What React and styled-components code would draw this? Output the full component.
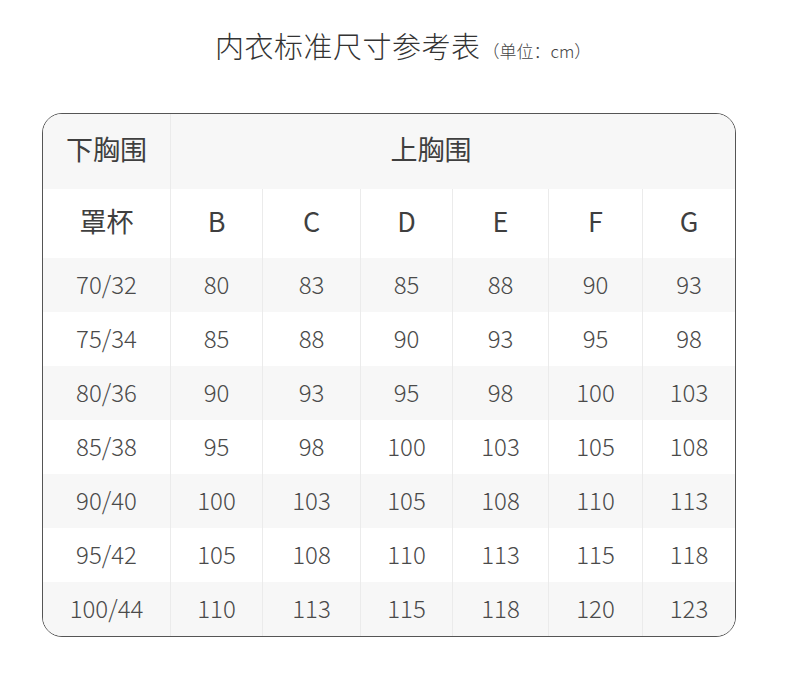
import React from 'react';
import styled, { createGlobalStyle } from 'styled-components';

const Global = createGlobalStyle`
  body {
    margin: 0;
    background: #fff;
    font-family: "Noto Sans CJK SC", "Noto Sans", sans-serif;
  }
`;

const Page = styled.div`
  width: 790px;
  height: 690px;
  padding-top: 24px;
  box-sizing: border-box;
`;

const Title = styled.h1`
  margin: 0 0 0 215px;
  height: 40px;
  display: flex;
  align-items: baseline;
  font-size: 29px;
  font-weight: 300;
  color: #333;
  letter-spacing: 0.5px;
`;

const Unit = styled.span`
  font-size: 17px;
  margin-left: 2px;
  color: #444;
  letter-spacing: 0;
`;

const Table = styled.div`
  margin: 49px 0 0 42px;
  width: 694px;
  box-sizing: border-box;
  border: 1px solid #555;
  border-radius: 20px;
  overflow: hidden;
  display: grid;
  grid-template-columns: 127px 92px 98px 92px 96px 94px 93px;
  grid-template-rows: 75px 69px repeat(7, 54px);
`;

const Cell = styled.div`
  display: flex;
  align-items: center;
  justify-content: center;
  padding-bottom: ${p => (p.$head ? '6px' : '4px')};
  padding-right: ${p => p.$pushLeft || '0'};
  box-sizing: border-box;
  background: ${p => (p.$shade ? '#f7f7f7' : '#fff')};
  border-left: ${p => (p.$first ? 'none' : '1px solid #ebebeb')};
  grid-column: ${p => p.$span || 'auto'};
  font-size: ${p => (p.$head ? '27px' : '24px')};
  font-weight: ${p => (p.$head ? 400 : 300)};
  color: ${p => (p.$head ? '#3f3f3f' : '#4a4a4a')};
`;

const cups = ['B', 'C', 'D', 'E', 'F', 'G'];

const rows = [
  ['70/32', 80, 83, 85, 88, 90, 93],
  ['75/34', 85, 88, 90, 93, 95, 98],
  ['80/36', 90, 93, 95, 98, 100, 103],
  ['85/38', 95, 98, 100, 103, 105, 108],
  ['90/40', 100, 103, 105, 108, 110, 113],
  ['95/42', 105, 108, 110, 113, 115, 118],
  ['100/44', 110, 113, 115, 118, 120, 123],
];

export default function App() {
  return (
    <Page>
      <Global />
      <Title>
        内衣标准尺寸参考表<Unit>（单位：cm）</Unit>
      </Title>
      <Table>
        <Cell $head $shade $first>下胸围</Cell>
        <Cell $head $shade $span="2 / 8" $pushLeft="44px">上胸围</Cell>

        <Cell $head $first>罩杯</Cell>
        {cups.map(c => (
          <Cell $head key={c}>{c}</Cell>
        ))}

        {rows.map((r, i) =>
          r.map((v, j) => (
            <Cell key={i + '-' + j} $shade={i % 2 === 0} $first={j === 0}>
              {v}
            </Cell>
          ))
        )}
      </Table>
    </Page>
  );
}
